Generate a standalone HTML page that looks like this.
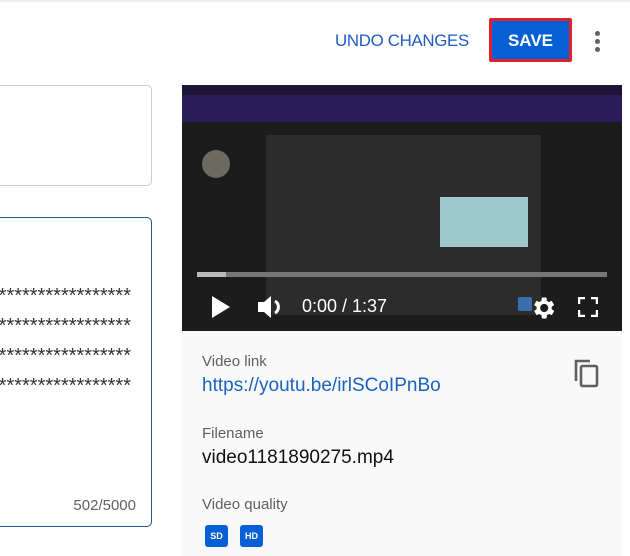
<!DOCTYPE html>
<html><head><style>
*{margin:0;padding:0;box-sizing:border-box}
body{width:630px;height:556px;background:#fff;font-family:"Liberation Sans",Arial,sans-serif;position:relative;overflow:hidden}
.a{position:absolute}
</style></head><body>
<div class="a" style="left:0;top:0;width:630px;height:2px;background:#eee"></div>
<div class="a" style="left:335px;top:31px;font-size:17px;color:#1e5bc6;letter-spacing:-0.3px;transform:scaleX(0.99);transform-origin:left">UNDO CHANGES</div>
<div class="a" style="left:489px;top:18px;width:83px;height:44px;border:3px solid #e0202a;background:#065fd4;border-radius:2px"></div>
<div class="a" style="left:489px;top:31px;width:83px;text-align:center;font-size:17px;color:#fff;font-weight:bold">SAVE</div>
<div class="a" style="left:595px;top:31px;width:5px;height:5px;border-radius:50%;background:#606060"></div>
<div class="a" style="left:595px;top:39px;width:5px;height:5px;border-radius:50%;background:#606060"></div>
<div class="a" style="left:595px;top:47px;width:5px;height:5px;border-radius:50%;background:#606060"></div>

<div class="a" style="left:-10px;top:85px;width:162px;height:101px;border:1px solid #ccc;border-radius:5px"></div>
<div class="a" style="left:-10px;top:217px;width:162px;height:310px;border:1px solid #1f5a9a;border-radius:5px"></div>
<div class="a" style="right:499px;top:281px;font-size:20px;color:#333;line-height:30px;white-space:nowrap;text-align:right">********************<br>********************<br>********************<br>********************</div>
<div class="a" style="right:494px;top:497px;font-size:15px;color:#606060">502/5000</div>

<div class="a" style="left:182px;top:85px;width:440px;height:246px;background:#1c1c1c;overflow:hidden">
 <div class="a" style="left:0;top:0;width:440px;height:37px;background:#2a1b5a"></div>
 <div class="a" style="left:0;top:0;width:440px;height:10px;background:#1e1438"></div>
 <div class="a" style="left:84px;top:50px;width:275px;height:180px;background:#2c2c2c"></div>
 <div class="a" style="left:258px;top:112px;width:88px;height:50px;background:#9cc8cc"></div>
 <div class="a" style="left:20px;top:65px;width:28px;height:28px;border-radius:50%;background:#6a6a60"></div>
 <div class="a" style="left:15px;top:187px;width:410px;height:5px;background:#777"></div>
 <div class="a" style="left:15px;top:187px;width:29px;height:5px;background:#bbb"></div>
 <svg class="a" style="left:24px;top:208px" width="28" height="28"><path d="M6 3v22l18-11z" fill="#fff"/></svg>
 <svg class="a" style="left:74px;top:207px" width="30" height="30"><path d="M2 10h6l7-6v22l-7-6H2z" fill="#fff"/><path d="M19 9a7 7 0 0 1 0 12" stroke="#fff" stroke-width="3" fill="none"/></svg>
 <div class="a" style="left:120px;top:211px;font-size:18px;color:#fff">0:00 / 1:37</div>
 <div class="a" style="left:336px;top:212px;width:14px;height:14px;background:#3a6fb0;border-radius:2px"></div>
 <svg class="a" style="left:347px;top:209px" width="28" height="28" viewBox="0 0 24 24"><path fill="#fff" d="M19.4 13a7.5 7.5 0 0 0 0-2l2.1-1.6-2-3.5-2.5 1a7.6 7.6 0 0 0-1.7-1L15 3h-4l-.4 2.9a7.6 7.6 0 0 0-1.7 1l-2.5-1-2 3.5L6.6 11a7.5 7.5 0 0 0 0 2l-2.1 1.6 2 3.5 2.5-1c.5.4 1.1.7 1.7 1L11 21h4l.4-2.9c.6-.3 1.2-.6 1.7-1l2.5 1 2-3.5zM13 15.5a3.5 3.5 0 1 1 0-7 3.5 3.5 0 0 1 0 7z"/></svg>
 <svg class="a" style="left:396px;top:212px" width="20" height="20"><path d="M1 7V1h6M13 1h6v6M19 13v6h-6M7 19H1v-6" stroke="#fff" stroke-width="2.5" fill="none"/></svg>
</div>
<div class="a" style="left:182px;top:331px;width:440px;height:225px;background:#f9f9f9"></div>
<div class="a" style="left:202px;top:353px;font-size:15px;color:#606060">Video link</div>
<div class="a" style="left:202px;top:375px;font-size:19px;color:#1a62c0">https://youtu.be/irlSCoIPnBo</div>
<svg class="a" style="left:572px;top:357px" width="30" height="32" viewBox="0 0 30 32"><path d="M4 24V4h14" stroke="#606060" stroke-width="2.6" fill="none"/><rect x="9" y="9" width="16" height="20" rx="1.5" stroke="#606060" stroke-width="2.6" fill="none"/></svg>
<div class="a" style="left:202px;top:425px;font-size:15px;color:#606060">Filename</div>
<div class="a" style="left:202px;top:447px;font-size:19px;color:#111">video1181890275.mp4</div>
<div class="a" style="left:202px;top:496px;font-size:15px;color:#606060">Video quality</div>
<div class="a" style="left:205px;top:525px;width:23px;height:22px;background:#065fd4;border-radius:3px;color:#fff;font-size:9px;font-weight:bold;text-align:center;line-height:22px">SD</div>
<div class="a" style="left:240px;top:525px;width:23px;height:22px;background:#065fd4;border-radius:3px;color:#fff;font-size:9px;font-weight:bold;text-align:center;line-height:22px">HD</div>
</body></html>
